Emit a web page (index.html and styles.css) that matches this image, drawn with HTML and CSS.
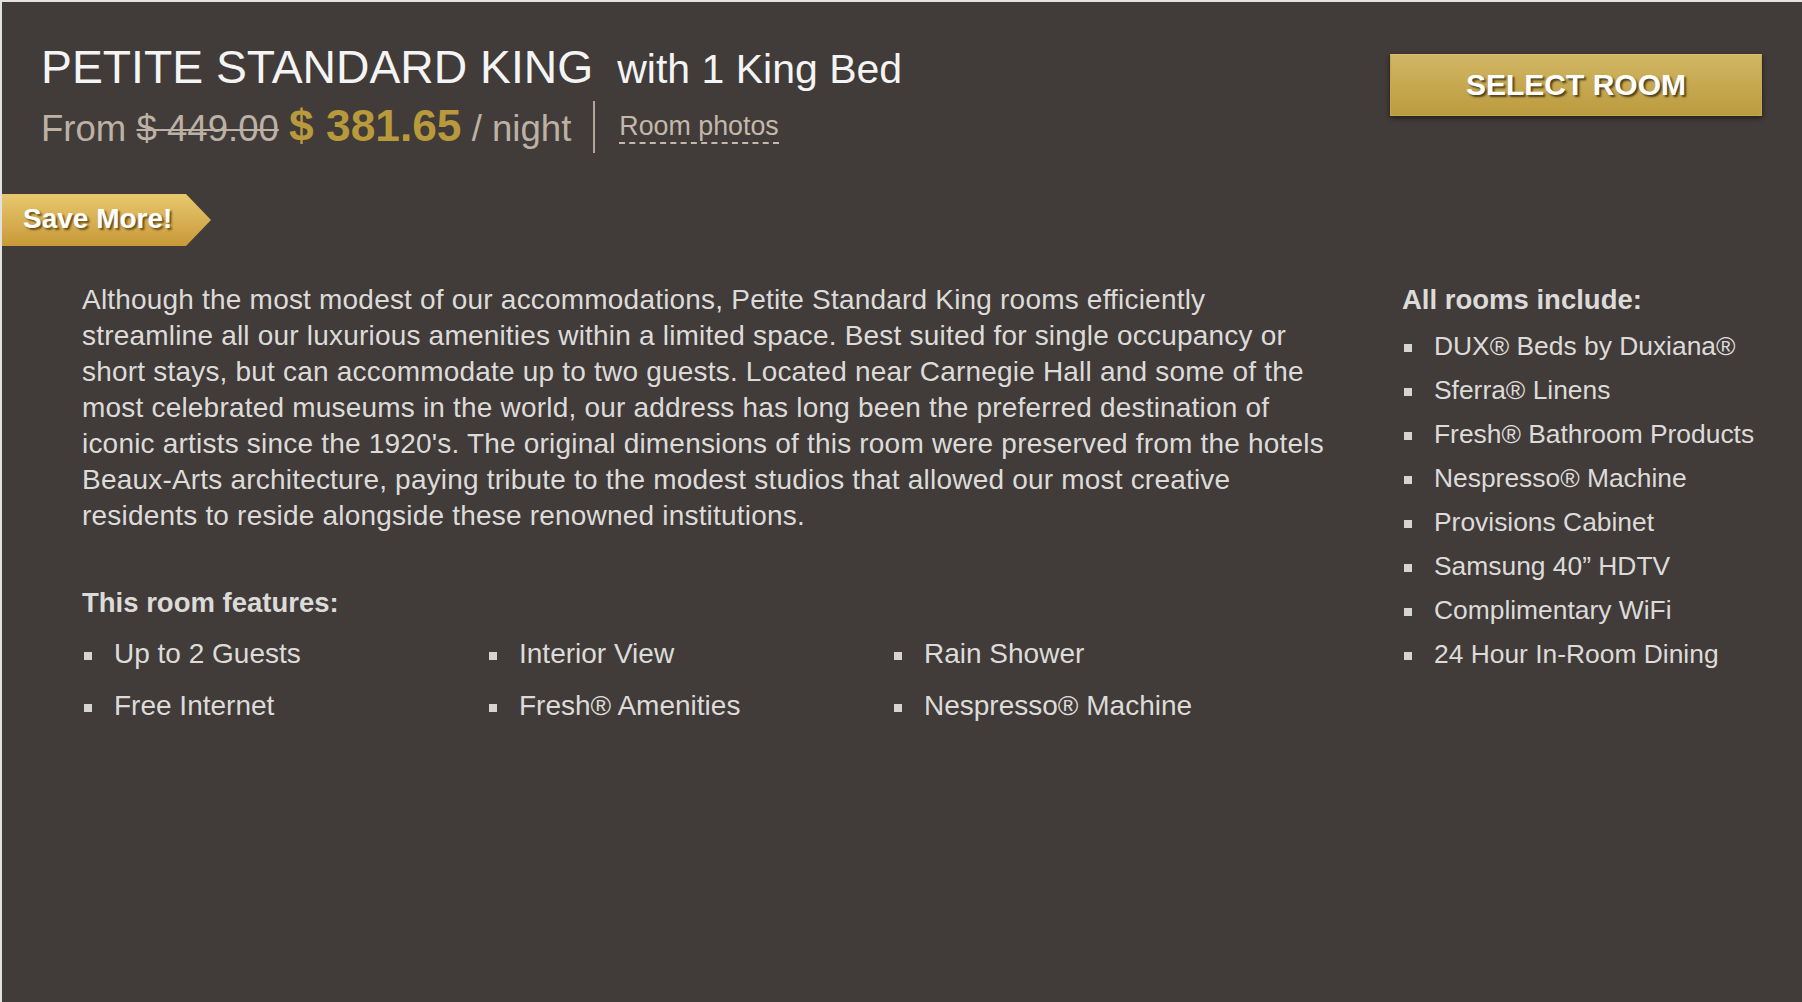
FILE: index.html
```html
<!DOCTYPE html>
<html lang="en">
<head>
<meta charset="utf-8">
<title>Petite Standard King</title>
<link rel="stylesheet" href="styles.css">
</head>
<body>
<div class="panel">
  <header class="head">
    <div class="head-left">
      <h1 class="title"><span class="name">PETITE STANDARD KING</span><span class="bed">with 1 King Bed</span></h1>
      <div class="price-row">
        <div class="price">From <s class="old">$ 449.00</s> <strong class="now">$ 381.65</strong> / night</div>
        <div class="photos"><a class="photos-link" href="#">Room photos</a></div>
      </div>
    </div>
    <button class="select" type="button">SELECT ROOM</button>
  </header>

  <div class="tag">Save More!</div>

  <div class="content">
    <div class="main">
      <p class="desc">Although the most modest of our accommodations, Petite Standard King rooms efficiently streamline all our luxurious amenities within a limited space. Best suited for single occupancy or short stays, but can accommodate up to two guests. Located near Carnegie Hall and some of the most celebrated museums in the world, our address has long been the preferred destination of iconic artists since the 1920's. The original dimensions of this room were preserved from the hotels Beaux-Arts architecture, paying tribute to the modest studios that allowed our most creative residents to reside alongside these renowned institutions.</p>
      <h3 class="features-title">This room features:</h3>
      <ul class="features">
        <li>Up to 2 Guests</li>
        <li>Interior View</li>
        <li>Rain Shower</li>
        <li>Free Internet</li>
        <li>Fresh® Amenities</li>
        <li>Nespresso® Machine</li>
      </ul>
    </div>
    <aside class="side">
      <h3 class="side-title">All rooms include:</h3>
      <ul class="includes">
        <li>DUX® Beds by Duxiana®</li>
        <li>Sferra® Linens</li>
        <li>Fresh® Bathroom Products</li>
        <li>Nespresso® Machine</li>
        <li>Provisions Cabinet</li>
        <li>Samsung 40” HDTV</li>
        <li>Complimentary WiFi</li>
        <li>24 Hour In-Room Dining</li>
      </ul>
    </aside>
  </div>
</div>
</body>
</html>
```

FILE: styles.css
```css
html, body {
  margin: 0;
  padding: 0;
}
body {
  background: #e2e2e2;
  font-family: "Liberation Sans", Arial, Helvetica, sans-serif;
}
.panel {
  margin: 2px 0 0 2px;
  background: #413c39;
  min-height: 1000px;
  overflow: hidden;
}

/* header */
.head {
  display: flex;
  justify-content: space-between;
  align-items: flex-start;
  padding: 39px 40px 0 39px;
}
.title {
  margin: 0;
  display: flex;
  align-items: baseline;
  font-weight: normal;
  color: #f4f4f4;
  line-height: 52px;
}
.name {
  font-size: 46.3px;
}
.bed {
  font-size: 41px;
  margin-left: 24px;
}
.price-row {
  display: flex;
  align-items: center;
  margin-top: 6px;
}
.price {
  font-size: 36.6px;
  line-height: 44px;
  color: #bcb1a4;
}
.old {
  text-decoration: line-through;
  text-decoration-thickness: 2px;
}
.now {
  font-size: 44.3px;
  line-height: 44px;
  font-weight: bold;
  color: #b8993b;
}
.photos {
  height: 52px;
  margin-left: 22px;
  padding-left: 24px;
  border-left: 2px solid #b2a699;
  display: flex;
  align-items: center;
}
.photos-link {
  display: inline-block;
  font-size: 26.8px;
  line-height: 27px;
  color: #c3b8ab;
  text-decoration: none;
  padding: 3px 0 2px;
  border-bottom: 2px dashed #c3b8ab;
}
.select {
  margin-top: 13px;
  width: 372px;
  height: 62px;
  border: 1px solid #c3a64f;
  border-top-color: #d8c075;
  background: linear-gradient(#d1b663, #bb9b3f);
  box-shadow: 0 2px 5px rgba(0, 0, 0, 0.55);
  color: #ffffff;
  font-family: "Liberation Sans", Arial, Helvetica, sans-serif;
  font-weight: bold;
  font-size: 30px;
  text-shadow: 2px 2px 2px rgba(40, 30, 10, 0.75);
  padding: 0;
  cursor: pointer;
}

/* save more tag */
.tag {
  margin-top: 41px;
  width: 209px;
  height: 52px;
  box-sizing: border-box;
  padding-left: 21px;
  line-height: 50px;
  font-size: 28px;
  font-weight: bold;
  color: #ffffff;
  text-shadow: 2px 2px 2px rgba(60, 40, 5, 0.7);
  background: linear-gradient(#e8c86f, #c89938);
  clip-path: polygon(0 0, 184px 0, 100% 50%, 184px 100%, 0 100%);
}

/* content */
.content {
  display: flex;
  gap: 72px;
  padding: 36px 0 0 80px;
}
.main {
  flex: 0 0 1248px;
}
.desc {
  margin: 0;
  font-size: 28px;
  line-height: 36px;
  letter-spacing: 0.2px;
  color: #dddbd9;
}
.features-title,
.side-title {
  margin: 0;
  font-size: 27.5px;
  line-height: 36px;
  font-weight: bold;
  color: #dcdbd9;
}
.features-title {
  margin-top: 51px;
}
.features {
  list-style: none;
  margin: 7px 0 0;
  padding: 0;
  display: grid;
  grid-template-columns: repeat(3, 405px);
}
.features li {
  font-size: 28px;
  line-height: 52px;
  color: #dddbd9;
  white-space: nowrap;
}
.features li::before,
.includes li::before {
  content: "";
  display: inline-block;
  width: 8px;
  height: 8px;
  background: #d6d4d2;
  vertical-align: 3px;
  margin-left: 2px;
  margin-right: 22px;
}
.side {
  flex: 1;
}
.side-title {
  margin-bottom: 6px;
}
.includes {
  list-style: none;
  margin: 0;
  padding: 0;
}
.includes li {
  font-size: 26.4px;
  line-height: 44px;
  color: #dddbd9;
  white-space: nowrap;
}
.includes li::before {
  margin-right: 22px;
}
```
